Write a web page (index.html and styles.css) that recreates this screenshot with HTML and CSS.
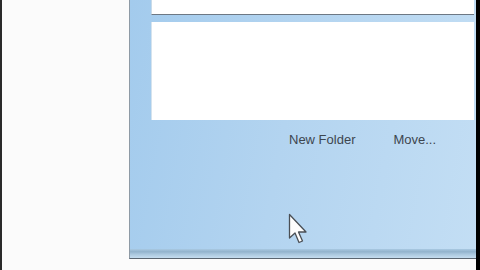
FILE: index.html
```html
<!DOCTYPE html>
<html lang="en">
<head>
  <meta charset="UTF-8">
  <meta name="viewport" content="width=device-width, initial-scale=1.0">
  <title>Move Items</title>
  <link rel="stylesheet" href="styles.css">
</head>
<body>
  <div class="edge-left"></div>
  <div class="desk"></div>

  <div class="window">
    <div class="panel-top"></div>
    <div class="panel-list"></div>

    <div class="actions">
      <span class="action">New Folder</span>
      <span class="action">Move...</span>
    </div>

    <div class="footer"></div>

    <svg class="cursor" width="20" height="32" viewBox="0 0 20 32">
      <path d="M1.5 1.5 L1.5 25 L7 20 L11 29.5 L14.5 28 L10.5 19 L18 19 Z"
            fill="#fdfdfd" stroke="#4a4f55" stroke-width="1.3" stroke-linejoin="round"/>
    </svg>
  </div>

  <div class="edge-right"></div>
</body>
</html>
```

FILE: styles.css
```css
:root {
  --page-color: #fbfbfb;
  --text-color: #3d464f;
  --edge-dark: #5a6570;
}

body {
  margin: 0;
  height: 270px;
  display: flex;
  overflow: hidden;
  background-color: var(--page-color);
  font-family: 'Liberation Sans', Arial, sans-serif;
}

.edge-left {
  width: 2px;
  background-color: #2a2a2a;
}

.desk {
  flex: 1;
}

.window {
  position: relative;
  box-sizing: border-box;
  width: 347px;
  height: 259px;
  padding: 0 2px 0 21px;
  display: flex;
  flex-direction: column;
  border-left: 1px solid #8e9aa5;
  border-bottom: 1px solid var(--edge-dark);
  background: linear-gradient(100deg, #a3cbed 0%, #b3d4f0 45%, #c3def4 100%);
}

.panel-top {
  height: 14px;
  background-color: #fff;
  border-left: 1px solid #c9dbe9;
  border-bottom: 1px solid #6d7884;
}

.panel-list {
  height: 98px;
  margin-top: 7px;
  background-color: #fff;
  border-left: 1px solid #d5e3ee;
}

.actions {
  display: flex;
  gap: 38px;
  margin-top: 12px;
  padding-left: 138px;
}

.action {
  font-size: 13px;
  line-height: 15px;
  color: var(--text-color);
}

.footer {
  margin-top: auto;
  margin-left: -21px;
  margin-right: -2px;
  height: 9px;
  background: linear-gradient(#a9c9e2 0%, #92b3cc 30%, #a8c6dd 55%, #c5ddef 100%);
}

.cursor {
  position: absolute;
  left: 158px;
  top: 213px;
  filter: blur(0.4px);
}

.edge-right {
  width: 4px;
  background-color: #000;
}
```
